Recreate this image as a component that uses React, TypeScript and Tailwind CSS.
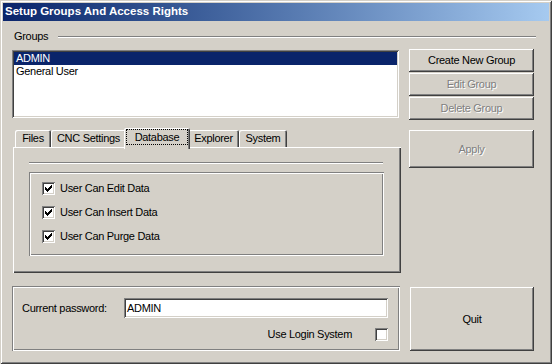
import React from 'react';

const font = { fontFamily: '"Liberation Sans", Arial, sans-serif' };

const checkPixels: [number, number, number][] = [
  [6, 0, 1],
  [5, 1, 2],
  [0, 2, 1],
  [4, 2, 3],
  [0, 3, 2],
  [3, 3, 3],
  [0, 4, 5],
  [1, 5, 3],
  [2, 6, 1],
];

function Check({ checked }: { checked?: boolean }) {
  return (
    <div className="w-[13px] h-[13px] shrink-0 bg-white shadow-[inset_1px_1px_#808080,inset_-1px_-1px_#fff,inset_2px_2px_#404040,inset_-2px_-2px_#d4d0c8] flex items-center justify-center">
      {checked && (
        <svg width="7" height="7" viewBox="0 0 7 7" shapeRendering="crispEdges">
          {checkPixels.map(([x, y, w], i) => (
            <rect key={i} x={x} y={y} width={w} height={1} fill="#000" />
          ))}
        </svg>
      )}
    </div>
  );
}

function Btn({ children, disabled, className = '' }: { children: React.ReactNode; disabled?: boolean; className?: string }) {
  return (
    <div
      className={`flex items-center justify-center bg-[#d4d0c8] shadow-[inset_-1px_-1px_#404040,inset_1px_1px_#fff,inset_-2px_-2px_#808080] text-[11px] ${
        disabled ? 'text-[#808080] [text-shadow:1px_1px_0_#fff]' : 'text-black'
      } ${className}`}
    >
      {children}
    </div>
  );
}

function Tab({ label, width, selected }: { label: string; width: string; selected?: boolean }) {
  if (selected) {
    return (
      <div className={`relative z-10 -mx-[2px] -mb-[2px] h-[21px] ${width} rounded-t-[2px] bg-[#d4d0c8] shadow-[inset_1px_1px_#fff,inset_-1px_0_#404040,inset_-2px_0_#808080] pt-[1px] px-[2px]`}>
        <div className="h-[16px] border border-dotted border-black flex items-center justify-center">{label}</div>
      </div>
    );
  }
  return (
    <div className={`h-[17px] ${width} rounded-t-[2px] bg-[#d4d0c8] shadow-[inset_1px_1px_#fff,inset_-1px_0_#404040,inset_-2px_0_#808080] flex items-center justify-center`}>
      {label}
    </div>
  );
}

export default function App() {
  const perms = ['User Can Edit Data', 'User Can Insert Data', 'User Can Purge Data'];

  return (
    <div style={font} className="w-[552px] h-[364px] p-[3px] bg-[#d4d0c8] text-[11px] tracking-[-0.3px] text-black shadow-[inset_1px_1px_#d4d0c8,inset_-1px_-1px_#404040,inset_2px_2px_#fff,inset_-2px_-2px_#808080] flex flex-col leading-none">
      <div className="h-[18px] shrink-0 pl-[2px] flex items-center bg-linear-to-r from-[#0a246a] to-[#a6caf0] text-white font-bold text-[11.5px] tracking-normal">
        Setup Groups And Access Rights
      </div>

      <div className="pl-[9px] pr-[13px]">
        <div className="mt-[9px] h-[13px] flex items-center">
          <span className="pl-[2px] w-[46px]">Groups</span>
          <div className="flex-1 h-[2px] border-t border-[#808080] border-b border-b-white" />
        </div>

        <div className="flex gap-[9px]">
          <div className="w-[388px] flex flex-col">
            <div className="mt-[7px] h-[68px] w-[387px] bg-white p-[2px] shadow-[inset_1px_1px_#808080,inset_-1px_-1px_#fff,inset_2px_2px_#404040,inset_-2px_-2px_#d4d0c8]">
              <div className="h-[13px] bg-[#0a246a] text-white pl-[2px] flex items-center">ADMIN</div>
              <div className="h-[13px] pl-[2px] flex items-center">General User</div>
            </div>

            <div className="mt-[10px] ml-[1px] flex flex-col">
              <div className="h-[19px] flex items-end pl-[2px]">
                <Tab label="Files" width="w-[36px]" />
                <Tab label="CNC Settings" width="w-[75px]" />
                <Tab label="Database" width="w-[66px]" selected />
                <Tab label="Explorer" width="w-[51px]" />
                <Tab label="System" width="w-[48px]" />
              </div>
              <div className="h-[126px] w-[388px] bg-[#d4d0c8] shadow-[inset_1px_1px_#fff,inset_-1px_-1px_#404040,inset_-2px_-2px_#808080] pt-[15px] pl-[16px]">
                <div className="w-[354px] h-[2px] border-t border-[#808080] border-b border-b-white" />
                <div className="mt-[8px] w-[355px] h-[84px] pt-[4px] pl-[13px] shadow-[inset_1px_1px_#808080,inset_2px_2px_#fff,inset_-1px_-1px_#fff,inset_-2px_-2px_#808080] flex flex-col">
                  {perms.map((p) => (
                    <div key={p} className="h-[24px] flex items-center gap-[5px]">
                      <Check checked />
                      <span>{p}</span>
                    </div>
                  ))}
                </div>
              </div>
            </div>

            <div className="mt-[13px] h-[65px] w-[388px] shadow-[inset_1px_1px_#808080,inset_2px_2px_#fff,inset_-1px_-1px_#fff,inset_-2px_-2px_#808080] flex flex-col">
              <div className="mt-[12px] h-[20px] flex items-center">
                <span className="pl-[10px] w-[112px]">Current password:</span>
                <div className="w-[264px] h-[20px] bg-white pl-[3px] flex items-center shadow-[inset_1px_1px_#808080,inset_-1px_-1px_#fff,inset_2px_2px_#404040,inset_-2px_-2px_#d4d0c8]">
                  ADMIN
                </div>
              </div>
              <div className="mt-[10px] h-[13px] flex items-center justify-end pr-[12px]">
                <span>Use Login System</span>
                <div className="ml-[23px]">
                  <Check />
                </div>
              </div>
            </div>
          </div>

          <div className="w-[125px] flex flex-col">
            <div className="mt-[6px] flex flex-col gap-[1px]">
              <Btn className="h-[23px]">Create New Group</Btn>
              <Btn className="h-[23px]" disabled>Edit Group</Btn>
              <Btn className="h-[23px]" disabled>Delete Group</Btn>
            </div>
            <Btn className="mt-[10px] h-[38px]" disabled>Apply</Btn>
            <Btn className="mt-[119px] ml-[1px] h-[64px]">Quit</Btn>
          </div>
        </div>
      </div>
    </div>
  );
}
